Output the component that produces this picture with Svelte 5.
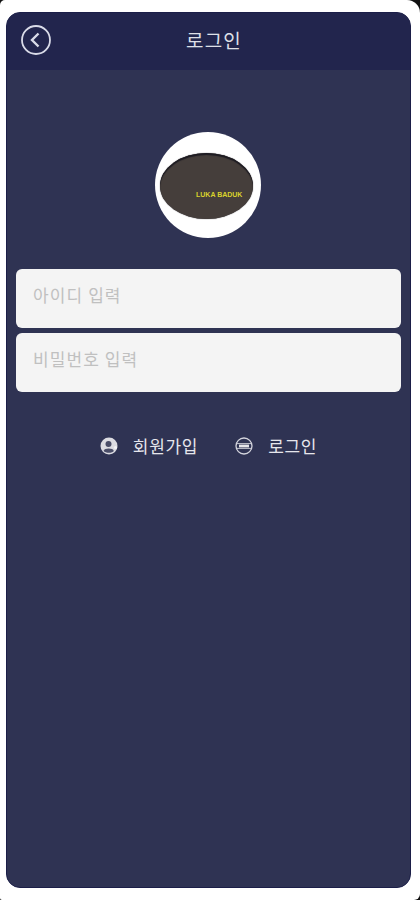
<script lang="ts">
  let userId = $state('');
  let password = $state('');
</script>

<div class="shell">
  <main class="screen">
    <header class="topbar">
      <button class="back" aria-label="뒤로">
        <svg width="32" height="32" viewBox="0 0 32 32" fill="none" stroke="#d9dbe8">
          <circle cx="16" cy="16" r="14" stroke-width="1.8" />
          <path d="M18.5 9.5 L12 16 L18.5 22.5" stroke-width="2.4" />
        </svg>
      </button>
      <h1>로그인</h1>
    </header>

    <div class="logo">
      <div class="stone">
        <span>LUKA BADUK</span>
      </div>
    </div>

    <form class="fields">
      <input type="text" placeholder="아이디 입력" bind:value={userId} />
      <input type="password" placeholder="비밀번호 입력" bind:value={password} />
    </form>

    <nav class="actions">
      <button class="action">
        <svg width="18" height="18" viewBox="0 0 18 18">
          <circle cx="9" cy="9" r="8.5" fill="#dcdce2" />
          <circle cx="8.5" cy="7" r="3" fill="#4a4d68" />
          <path d="M3.6 14 C4.4 10.8 13 10.8 13.8 14 C12.6 16.4 5.4 16.4 3.6 14Z" fill="#4a4d68" />
          <circle cx="15.5" cy="10.5" r="1.6" fill="#f4f4f6" />
        </svg>
        회원가입
      </button>
      <button class="action">
        <svg width="18" height="18" viewBox="0 0 18 18" fill="none" stroke="#d4d5dd">
          <circle cx="9" cy="9" r="8" stroke-width="1.3" />
          <path d="M1.5 6.6 H16.5 M1.5 11.4 H16.5" stroke-width="0.9" />
          <rect x="4" y="7.6" width="10" height="2.8" fill="#e6e6ea" stroke="none" />
        </svg>
        로그인
      </button>
    </nav>
  </main>
</div>

<style>
  :global(body) {
    margin: 0;
    background: #111;
  }

  .shell {
    height: 900px;
    box-sizing: border-box;
    padding: 12px 9px 12px 6px;
    background: #fff;
    border-radius: 5px 13px 6px 2px;
    font-family: "Noto Sans CJK KR", "Noto Sans", sans-serif;
  }

  .screen {
    height: 100%;
    background: #2f3353;
    border-radius: 14px;
    border: 1px solid #1b1e48;
    box-sizing: border-box;
    overflow: hidden;
    display: flex;
    flex-direction: column;
    align-items: center;
  }

  .topbar {
    align-self: stretch;
    height: 57px;
    flex: none;
    background: #22254d;
    display: flex;
    align-items: center;
    justify-content: center;
    position: relative;
  }

  .topbar h1 {
    margin: 0 0 4px 11px;
    color: #dfe0e8;
    font-size: 19px;
    font-weight: 400;
    letter-spacing: 1.2px;
  }

  .back {
    position: absolute;
    left: 13px;
    top: 11px;
    padding: 0;
    width: 32px;
    height: 32px;
    background: none;
    border: none;
    display: block;
  }

  .back svg {
    display: block;
  }

  .logo {
    width: 106px;
    height: 106px;
    margin-top: 62px;
    margin-left: -1px;
    border-radius: 50%;
    background: #fff;
    display: flex;
    align-items: center;
    justify-content: center;
  }

  .stone {
    width: 93px;
    height: 66px;
    margin: 2px 3px 0 0;
    border-radius: 50% / 50%;
    background: #453e3b;
    box-shadow: inset 0 2px 1px #1d1b22, 0 0 1px #1d1b22;
    position: relative;
  }

  .stone span {
    position: absolute;
    left: 36px;
    top: 38px;
    color: #d9d22c;
    font-family: "Liberation Sans", sans-serif;
    font-size: 7px;
    font-weight: 700;
    white-space: nowrap;
  }

  .fields {
    align-self: stretch;
    margin: 31px 9px 0;
    display: flex;
    flex-direction: column;
    gap: 5px;
  }

  .fields input {
    height: 59px;
    box-sizing: border-box;
    width: 100%;
    padding: 0 17px 9px;
    border: none;
    border-radius: 6px;
    background: #f4f4f4;
    font: inherit;
    font-size: 17px;
    letter-spacing: 1.1px;
    outline: none;
  }

  .fields input::placeholder {
    color: #c0c0c0;
  }

  .actions {
    margin-top: 41px;
    display: flex;
    gap: 37px;
  }

  .action {
    display: flex;
    align-items: center;
    gap: 15px;
    padding: 0;
    background: none;
    border: none;
    color: #e6e6ec;
    font: inherit;
    font-size: 17px;
    font-weight: 400;
    letter-spacing: 0.7px;
  }
</style>
